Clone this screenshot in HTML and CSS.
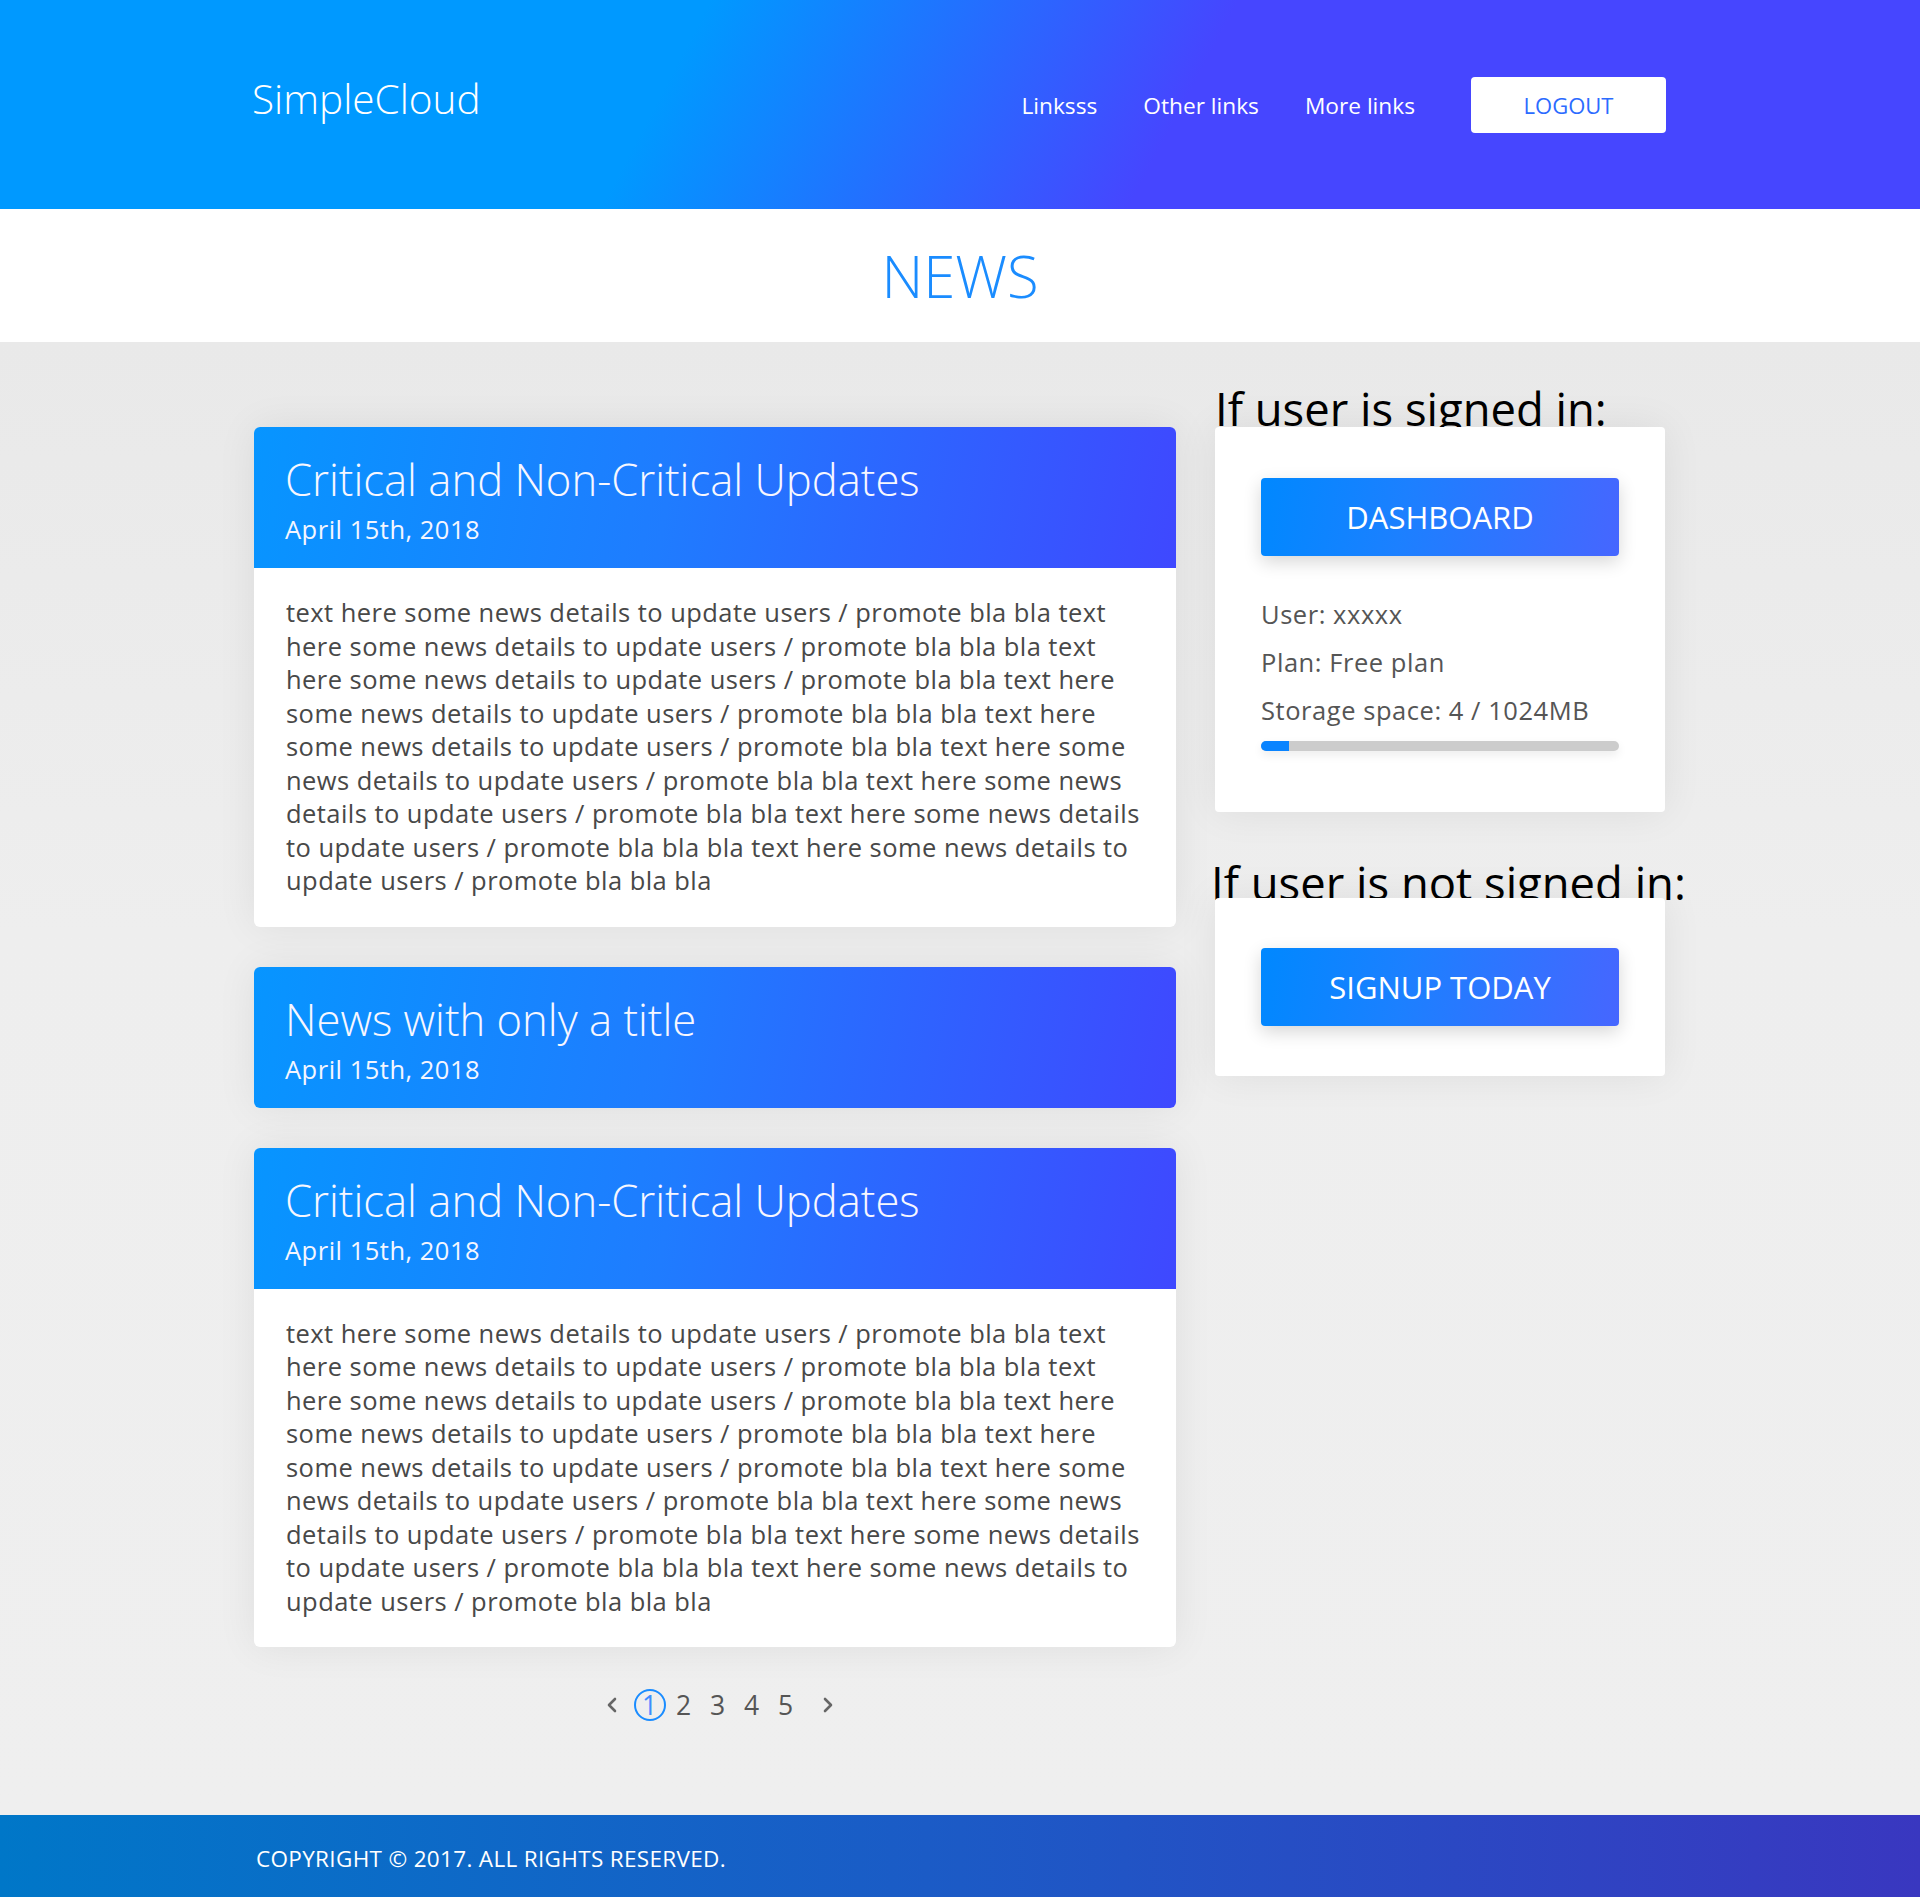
FILE: index.html
```html
<!DOCTYPE html>
<html lang="en">
<head>
<meta charset="utf-8">
<title>SimpleCloud - News</title>
<link rel="stylesheet" href="styles.css">
</head>
<body>
<header class="topbar">
  <div class="container topbar-inner">
    <a class="logo" href="#">SimpleCloud</a>
    <nav class="nav">
      <a class="nav-link" href="#">Linksss</a>
      <a class="nav-link" href="#">Other links</a>
      <a class="nav-link" href="#">More links</a>
      <a class="btn-logout" href="#">LOGOUT</a>
    </nav>
  </div>
</header>

<section class="page-title">
  <h1>NEWS</h1>
</section>

<main class="main">
  <div class="container main-grid">
    <div class="news-col">
      <article class="news-card">
        <div class="news-head">
          <h2 class="news-title">Critical and Non-Critical Updates</h2>
          <div class="news-date">April 15th, 2018</div>
        </div>
        <div class="news-body">text here some news details to update users / promote bla bla text here some news details to update users / promote bla bla bla text here some news details to update users / promote bla bla text here some news details to update users / promote bla bla bla text here some news details to update users / promote bla bla text here some news details to update users / promote bla bla text here some news details to update users / promote bla bla text here some news details to update users / promote bla bla bla text here some news details to update users / promote bla bla bla</div>
      </article>

      <article class="news-card">
        <div class="news-head">
          <h2 class="news-title">News with only a title</h2>
          <div class="news-date">April 15th, 2018</div>
        </div>
      </article>

      <article class="news-card">
        <div class="news-head">
          <h2 class="news-title">Critical and Non-Critical Updates</h2>
          <div class="news-date">April 15th, 2018</div>
        </div>
        <div class="news-body">text here some news details to update users / promote bla bla text here some news details to update users / promote bla bla bla text here some news details to update users / promote bla bla text here some news details to update users / promote bla bla bla text here some news details to update users / promote bla bla text here some news details to update users / promote bla bla text here some news details to update users / promote bla bla text here some news details to update users / promote bla bla bla text here some news details to update users / promote bla bla bla</div>
      </article>

      <nav class="pager">
        <a class="pager-arrow" href="#"><svg width="12" height="16" viewBox="0 0 12 16"><polyline points="9,2 3,8 9,14" fill="none" stroke="#666" stroke-width="2.6" stroke-linecap="round" stroke-linejoin="round"/></svg></a>
        <a class="pager-num current" href="#">1</a>
        <a class="pager-num" href="#">2</a>
        <a class="pager-num" href="#">3</a>
        <a class="pager-num" href="#">4</a>
        <a class="pager-num" href="#">5</a>
        <a class="pager-arrow next" href="#"><svg width="12" height="16" viewBox="0 0 12 16"><polyline points="3,2 9,8 3,14" fill="none" stroke="#666" stroke-width="2.6" stroke-linecap="round" stroke-linejoin="round"/></svg></a>
      </nav>
    </div>

    <aside class="side-col">
      <h3 class="side-heading">If user is signed in:</h3>
      <div class="side-card">
        <a class="btn-grad" href="#">DASHBOARD</a>
        <ul class="user-info">
          <li>User: xxxxx</li>
          <li>Plan: Free plan</li>
          <li>Storage space: 4 / 1024MB</li>
        </ul>
        <div class="storage-bar"><div class="storage-fill" style="width: 7.8%"></div></div>
      </div>

      <h3 class="side-heading second">If user is not signed in:</h3>
      <div class="side-card compact">
        <a class="btn-grad" href="#">SIGNUP TODAY</a>
      </div>
    </aside>
  </div>
</main>

<footer class="footer">
  <div class="container">
    <p class="copyright">COPYRIGHT © 2017. ALL RIGHTS RESERVED.</p>
  </div>
</footer>
</body>
</html>
```

FILE: styles.css
```css
* { box-sizing: border-box; }

html, body {
  margin: 0;
  padding: 0;
}

body {
  font-family: "Open Sans", "Noto Sans", "DejaVu Sans", sans-serif;
  background: #eeeeee;
  color: #222;
}

a { text-decoration: none; }

.container {
  width: 1412px;
  margin: 0 auto;
}

/* ---------- Header ---------- */
.topbar {
  height: 209px;
  background: linear-gradient(118deg, #0099ff 0%, #0099ff 35%, #4646ff 61%, #4646ff 100%);
}

.topbar-inner {
  height: 100%;
  display: flex;
  align-items: center;
  justify-content: space-between;
}

.logo {
  color: #fff;
  font-size: 40.5px;
  font-weight: 300;
  line-height: 1;
  margin-top: -10px;
  margin-left: -2px;
}

.nav {
  display: flex;
  align-items: center;
  gap: 46px;
}

.nav-link {
  color: #fff;
  font-size: 22.7px;
  line-height: 1;
  padding-top: 3px;
}

.btn-logout {
  margin-left: 10px;
  width: 195px;
  height: 56px;
  display: flex;
  align-items: center;
  justify-content: center;
  background: #fff;
  color: #2b6bff;
  font-size: 22px;
  border-radius: 4px;
}

/* ---------- Title band ---------- */
.page-title {
  height: 133px;
  background: #fff;
  display: flex;
  align-items: center;
  justify-content: center;
}

.page-title h1 {
  margin: 0;
  font-size: 58px;
  font-weight: 300;
  color: #1a8cff;
  line-height: 1;
}

/* ---------- Main ---------- */
.main {
  background: linear-gradient(180deg, #e9e9e9 0%, #eeeeee 40%, #efefef 100%);
  padding: 42px 0 92px;
}

.main-grid {
  display: grid;
  grid-template-columns: 922px 450px;
  column-gap: 39px;
  align-items: start;
}

.news-col {
  padding-top: 43px;
  display: flex;
  flex-direction: column;
  gap: 40px;
}

.news-card {
  background: #fff;
  border-radius: 6px;
  box-shadow: 0 0 40px rgba(0, 0, 0, 0.07);
  overflow: hidden;
}

.news-head {
  background: linear-gradient(100deg, #0795ff 0%, #1f7cff 45%, #3f48ff 100%);
  color: #fff;
  padding: 24px 31px 22px;
}

.news-title {
  margin: 0;
  font-size: 43.6px;
  font-weight: 350;
  line-height: 56px;
  color: #f7f7ff;
}

.news-date {
  margin-top: 5px;
  font-size: 25.5px;
  letter-spacing: 0.5px;
  line-height: 34px;
  color: #f4f6ff;
}

.news-body {
  padding: 28px 32px 29px;
  font-size: 25.5px;
  letter-spacing: 0.45px;
  line-height: 33.5px;
  color: #484848;
}

/* ---------- Pager ---------- */
.pager {
  display: flex;
  justify-content: center;
  align-items: center;
  height: 36px;
  gap: 2px;
  padding-left: 9px;
}

.pager-num {
  width: 32px;
  height: 32px;
  display: flex;
  align-items: center;
  justify-content: center;
  font-size: 26.5px;
  color: #555;
  line-height: 1;
}

.pager-num.current {
  border: 2px solid #1a8cff;
  border-radius: 50%;
  color: #3f8cff;
}

.pager-arrow {
  width: 24px;
  height: 32px;
  display: flex;
  align-items: center;
  justify-content: center;
  margin-right: 8px;
}

.pager-arrow.next {
  margin-right: 0;
  margin-left: 12px;
}

/* ---------- Sidebar ---------- */
.side-heading {
  margin: 0 0 -5px;
  font-size: 45.4px;
  font-weight: 400;
  line-height: 48px;
  color: #000;
  white-space: nowrap;
}

.side-heading.second {
  margin: 46px 0 -8px -4px;
}

.side-card {
  position: relative;
  background: #fff;
  border-radius: 4px;
  box-shadow: 0 0 40px rgba(0, 0, 0, 0.07);
  padding: 51px 46px 61px;
}

.side-card.compact {
  padding: 50px 46px;
}

.btn-grad {
  display: flex;
  align-items: center;
  justify-content: center;
  height: 78px;
  border-radius: 4px;
  background: linear-gradient(100deg, #0088ff 0%, #1c80ff 40%, #4666ff 100%);
  color: #fff;
  font-size: 31px;
  box-shadow: 0 6px 18px rgba(0, 0, 0, 0.16);
}

.user-info {
  list-style: none;
  margin: 34px 0 0;
  padding: 0;
  font-size: 25.5px;
  letter-spacing: 0.55px;
  line-height: 48px;
  color: #555;
}

.storage-bar {
  margin-top: 7px;
  height: 10px;
  border-radius: 5px;
  background: #cccccc;
  overflow: hidden;
  box-shadow: 0 4px 10px rgba(0, 0, 0, 0.08);
}

.storage-fill {
  height: 100%;
  background: #0a84ff;
}

/* ---------- Footer ---------- */
.footer {
  height: 82px;
  background: linear-gradient(90deg, #0077c8 0%, #1c5ac6 50%, #3937c0 100%);
  display: flex;
  align-items: center;
}

.copyright {
  margin: 6px 0 0 2px;
  color: #fff;
  font-size: 22.5px;
  letter-spacing: 0.33px;
  line-height: 1;
}
```
